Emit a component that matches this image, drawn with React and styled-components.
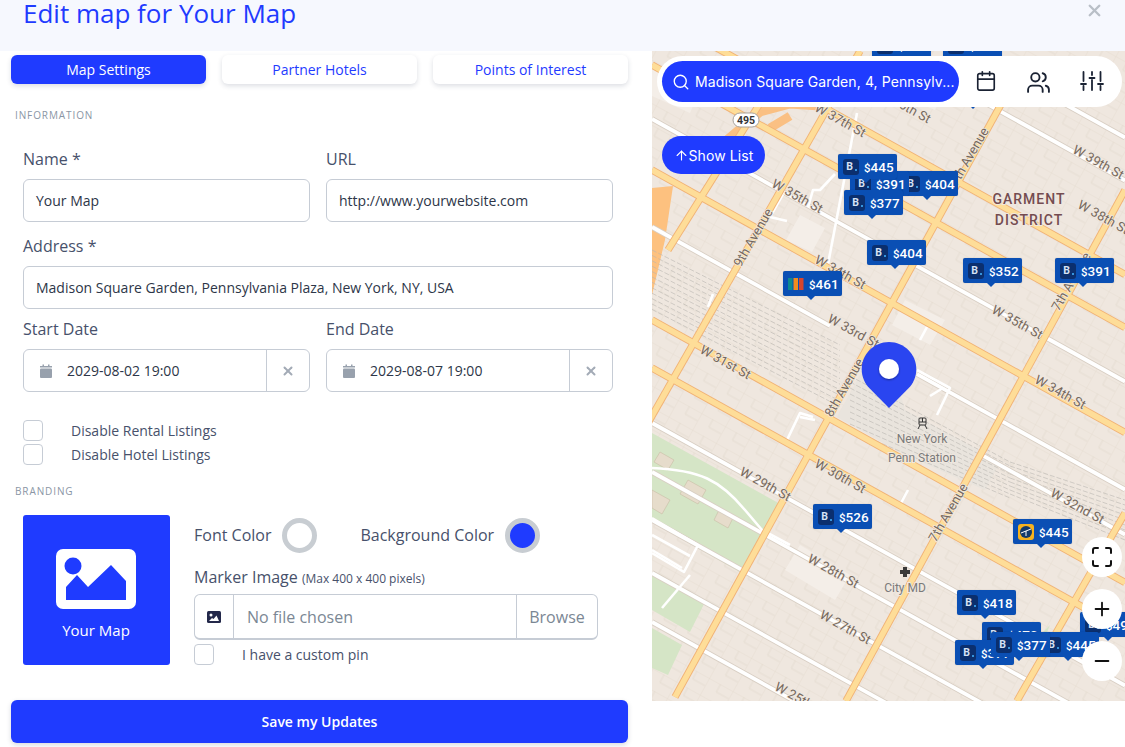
import React from "react";
import styled, { createGlobalStyle } from "styled-components";
import { Search, Calendar, Users, ArrowUp, X, Plus, Minus } from "lucide-react";

const BLUE = "#1f3bff";

const Global = createGlobalStyle`
  *, *::before, *::after { box-sizing: border-box; }
  html, body { margin: 0; padding: 0; background: #fff; overflow: hidden; }
  body { font-family: "Open Sans", "Liberation Sans", sans-serif; }
`;

const Page = styled.div`width: 1125px; height: 747px; overflow: hidden; display: flex; flex-direction: column;`;
const Header = styled.header`height: 51px; flex: none; background: #f6f8fe; display: flex; justify-content: space-between; align-items: flex-start; padding: 0 23px;`;
const Title = styled.h1`margin: 0; font-size: 26px; line-height: 26px; font-weight: 400; color: ${BLUE};`;
const Close = styled.div`color: #b9bfc7; display: flex; margin-top: 1px; margin-right: -2px;`;
const Body = styled.div`flex: 1; display: flex; min-height: 0;`;
const Left = styled.section`width: 652px; flex: none; padding: 4px 24px 0 11px; display: flex; flex-direction: column;`;
const Tabs = styled.nav`display: grid; grid-template-columns: repeat(3, 195px); gap: 16px; height: 29px;`;
const Tab = styled.button`
  border: 0; border-radius: 6px; font: 400 14px "Open Sans", sans-serif; padding: 0;
  background: ${p => (p.$active ? BLUE : "#fff")}; color: ${p => (p.$active ? "#fff" : BLUE)};
  box-shadow: 0 2px 5px rgba(40, 50, 80, .16);
`;
const Section = styled.div`
  font-size: 10px; line-height: 14px; letter-spacing: .9px; color: #8a96a5; margin: ${p => p.$m}; padding-left: 4px;
`;
const Fields = styled.div`padding-left: 12px; display: grid; grid-template-columns: 287px 287px; column-gap: 16px;`;
const Field = styled.div`grid-column: ${p => (p.$wide ? "1 / -1" : "auto")}; display: flex; flex-direction: column; margin-bottom: ${p => p.$mb || 0}px;`;
const Label = styled.label`font-size: 16px; line-height: 22px; color: #47516b; margin-bottom: 9px;`;
const Input = styled.div`
  height: 43px; border: 1px solid #c6ccd5; border-radius: 6px; display: flex; align-items: center;
  padding-left: 12px; font-size: 14px; color: #2d3648; background: #fff;
`;
const DateText = styled.span`flex: 1; margin-left: 15px;`;
const ClearCell = styled.div`width: 43px; height: 100%; border-left: 1px solid #c6ccd5; color: #a3abb6; display: flex; align-items: center; justify-content: center;`;
const CheckRow = styled.div`display: flex; align-items: center; height: 21px; margin-top: ${p => p.$mt || 0}px; color: #47516b; font-size: 14px; margin-left: ${p => p.$ml || 0}px;`;
const Box = styled.span`width: 20px; height: 21px; border: 1px solid #c6ccd5; border-radius: 4px; flex: none; margin-right: 28px; background: #fff;`;
const Branding = styled.div`display: flex; padding-left: 12px; margin-top: 17px;`;
const Logo = styled.div`
  width: 147px; height: 150px; background: ${BLUE}; border-radius: 3px; color: #fff; flex: none;
  display: flex; flex-direction: column; align-items: center; padding: 34px 1px 0 0; font-size: 15px;
`;
const LogoName = styled.div`margin-top: 10px; line-height: 22px;`;
const BrandCol = styled.div`margin-left: 24px; flex: 1; display: flex; flex-direction: column;`;
const ColorRow = styled.div`display: flex; align-items: center; height: 36px; margin-top: 2px; font-size: 16px; color: #47516b;`;
const Swatch = styled.span`width: 35px; height: 35px; border-radius: 50%; border: 5px solid #c8cdd2; background: ${p => p.$c}; margin: 0 ${p => p.$after || 0}px 0 11px; flex: none;`;
const MarkerLabel = styled.div`font-size: 16px; line-height: 22px; color: #47516b; margin-top: 13px;`;
const Small = styled.span`font-size: 12px;`;
const FileBox = styled.div`
  width: 404px; height: 46px; margin-top: 4px; border: 1px solid #c6ccd5; border-bottom-width: 2px; border-radius: 6px;
  display: flex; align-items: stretch; font-size: 16px; color: #7b8794;
`;
const FileIcon = styled.div`width: 39px; border-right: 1px solid #c6ccd5; display: flex; align-items: center; justify-content: center;`;
const FileName = styled.div`flex: 1; display: flex; align-items: center; padding-left: 13px;`;
const Browse = styled.div`width: 81px; border-left: 1px solid #c6ccd5; display: flex; align-items: center; justify-content: center;`;
const Save = styled.button`
  width: 617px; height: 43px; margin-top: 35px; border: 0; border-radius: 6px; background: ${BLUE}; color: #fff;
  font: 600 14px "Open Sans", sans-serif; box-shadow: 0 2px 5px rgba(40, 50, 80, .18); flex: none;
`;

const MapWrap = styled.div`position: relative; width: 473px; height: 650px; overflow: hidden; background: #efe7df; font-family: Inter, sans-serif;`;
const MapSvg = styled.svg`display: block; width: 473px; height: 650px;`;
const SearchBar = styled.div`
  position: absolute; left: 5px; top: 5px; width: 465px; height: 51px; border-radius: 26px; background: #fff;
  display: flex; align-items: center; padding-left: 5px; color: #1a2233;
`;
const SearchPill = styled.div`
  width: 297px; height: 41px; border-radius: 21px; background: ${BLUE}; color: #fff; display: flex; align-items: center;
  padding-left: 10px; font-size: 14px; letter-spacing: .1px; flex: none; white-space: nowrap;
`;
const SearchText = styled.span`margin-left: 5px;`;
const BarIcon = styled.div`position: absolute; top: ${p => p.$y || 14}px; left: ${p => p.$x}px; display: flex;`;
const ShowList = styled.div`
  position: absolute; left: 10px; top: 85px; width: 103px; height: 38px; border-radius: 19px; background: ${BLUE}; color: #fff;
  display: flex; align-items: center; justify-content: center; font-size: 14px; letter-spacing: .1px;
`;
const RoundBtn = styled.div`
  position: absolute; left: 430px; top: ${p => p.$y}px; width: 40px; height: 40px; border-radius: 50%; background: #fff; color: #111;
  display: flex; align-items: center; justify-content: center;
`;
const MarkerBox = styled.div`
  position: absolute; left: ${p => p.$x - 652}px; top: ${p => p.$y - 51}px; width: 59px; height: 25px; background: #0a4fb4; border-radius: 2px;
  box-shadow: 0 0 1px rgba(0,0,0,.3); color: #fff; display: flex; align-items: center; padding-left: 5px; font-family: Roboto, sans-serif;
  font-size: 13.5px; font-weight: 500;
  &::after {
    content: ""; position: absolute; left: 24px; top: 25px; border: 4px solid transparent; border-top-color: #0a4fb4; border-bottom: 0;
  }
`;
const Price = styled.span`margin-left: 5px; white-space: nowrap;`;
const Dollar = styled.span`font-size: 11.5px;`;
const BIcon = styled.span`
  width: 16px; height: 16px; border-radius: 3px; background: #0b2f6e; flex: none; display: flex; align-items: center;
  justify-content: center; font: 700 10.5px Roboto, sans-serif; color: #d6e2f5; position: relative; padding: 0 3px 1px 0;
  &::after { content: ""; position: absolute; right: 2.5px; bottom: 4px; width: 1.6px; height: 1.6px; border-radius: 50%; background: #3fa9f5; }
`;
const Pin = styled.svg`position: absolute; left: 209px; top: 290px;`;

const streets = [
  [-125, "w", 980, 1125], [-82, "w", 790, 1125], [12, "o", 652, 1125], [65, "o", 652, 1125],
  [119, "w", 652, 1125], [170, "o", 652, 1125], [227, "w", 652, 830], [227, "w", 917, 1125],
  [272, "w", 983, 1125], [320, "o", 652, 1125], [368, "o", 652, 1125], [423, "w", 652, 1125],
  [472, "w", 652, 1125], [520, "w", 652, 1125], [573, "w", 652, 1125], [622, "w", 652, 1125],
];
const aves = [
  [1017, 701, 1125, 513], [846, 701, 1125, 190], [675, 697, 1010, 88], [640, 437, 860, 51], [668, 250, 762, 100],
];
const labels = [
  ["W 37th St", 840, 121, 29], ["W 35th St", 797, 197, 29], ["W 34th St", 840, 273, 29], ["9th Avenue", 754, 238, -60],
  ["8th Avenue", 845, 388, -60], ["W 33rd St", 853, 332, 29], ["W 31st St", 725, 363, 29], ["W 30th St", 840, 477, 29],
  ["W 29th St", 765, 485, 29], ["W 34th St", 1060, 393, 29], ["W 35th St", 1017, 323, 29], ["7th Avenue", 1072, 282, -60],
  ["7th Avenue", 949, 513, -60], ["W 32nd St", 1077, 507, 29], ["W 28th St", 833, 572, 29], ["W 27th St", 845, 628, 29],
  ["W 25th St", 800, 700, 29], ["W 39th St", 1098, 163, 29], ["W 38th St", 1103, 218, 29], ["7th Avenue", 970, 157, -60],
  ["W 36th St", 905, 107, 29],
];
const service = [
  "M783 194 L770 217 L787 221", "M835 174 L820 190 L813 190 L808 207", "M857 113 L828 264",
  "M793 278 L788 291", "M713 294 L708 307", "M927 327 L920 340", "M917 370 L950 388 L937 415", "M930 396 L943 388",
  "M813 417 L800 413 L787 440 M800 417 L815 420", "M908 490 L900 505", "M652 468 C700 470 720 480 745 510 L762 530 L790 545",
  "M652 518 L698 545 L684 572 L652 553", "M652 535 L690 556", "M690 575 L662 608", "M652 550 L682 568",
];
const rails = [];
for (let i = 0; i < 12; i++) rails.push([652, 250 + i * 5.4, 840, 345 + i * 5.6]);
for (let i = 0; i < 10; i++) rails.push([850, 376 + i * 6, 1010, 462 + i * 4]);
for (let i = 0; i < 9; i++) rails.push([1010, 462 + i * 4, 1125, 500 + i * 5]);

const line = (y0, x) => y0 + 0.555 * (x - 652);

function MapDrawing() {
  const orange = streets.filter(s => s[1] === "o").map(([y, , a, b]) => `M${a} ${line(y, a)} L${b} ${line(y, b)}`)
    .concat(aves.map(([a, b, c, d]) => `M${a} ${b} L${c} ${d}`));
  return (
    <MapSvg viewBox="652 51 473 650" xmlns="http://www.w3.org/2000/svg">
      <defs>
        <pattern id="blocks" width="27" height="19" patternUnits="userSpaceOnUse" patternTransform="rotate(29) translate(4 2)">
          <path d="M0 0H27M0 0V19M13 9H27M13 0V9" fill="none" stroke="#dfd6ca" strokeWidth=".6" />
        </pattern>
      </defs>
      <rect x="652" y="51" width="473" height="650" fill="#efe7df" />
      <rect x="652" y="51" width="473" height="650" fill="url(#blocks)" />
      <path d="M652 433 L782 505 L745 575 L652 522Z M652 575 L704 604 L690 632 L652 610Z M652 628 L682 645 L668 675 L652 668Z M1035 640 L1050 625 L1040 650Z" fill="#d5e5c6" />
      <path d="M660 452 l14 8 -6 10 -14 -8z M688 480 l18 10 -8 14 -18 -10z M720 508 l14 8 -6 12 -14 -8z M652 490 l18 10 -8 14 -10 -6z" fill="#e6dccb" stroke="#c5b79e" strokeWidth=".5" />
      <path d="M837 417 L860 375 L900 392 L905 410 L1000 462 L985 490 L905 455 Z" fill="#e9e4dd" />
      <path d="M652 67 L700 90 L690 113 L652 96Z M800 215 L825 228 L812 252 L786 240Z M910 75 L945 90 L935 110 L900 95Z M905 300 L945 320 L930 345 L892 325Z M800 545 L850 575 L835 600 L785 570Z" fill="#f4eee8" />
      <path d="M652 188 L673 186 L665 240 L652 295Z" fill="#fdc17f" />
      <path d="M715 150 L760 112 L790 104 L820 106 M770 128 L790 116" fill="none" stroke="#fac083" strokeWidth="9" />
      {rails.map(([a, b, c, d], i) => (
        <path key={i} d={`M${a} ${b} L${c} ${d}`} stroke="#b9b5b0" strokeWidth=".6" strokeDasharray="5 2" fill="none" />
      ))}
      {streets.filter(s => s[1] === "w").map(([y, , a, b], i) => (
        <g key={i}>
          <path d={`M${a} ${line(y, a)} L${b} ${line(y, b)}`} stroke="#d8cec3" strokeWidth="5.5" />
          <path d={`M${a} ${line(y, a)} L${b} ${line(y, b)}`} stroke="#fff" strokeWidth="3.8" />
        </g>
      ))}
      {service.map((d, i) => (
        <path key={i} d={d} fill="none" stroke="#fff" strokeWidth="2.6" strokeLinejoin="round" />
      ))}
      {orange.map((d, i) => <path key={i} d={d} stroke="#f1b275" strokeWidth="7.4" />)}
      {orange.map((d, i) => <path key={`i${i}`} d={d} stroke="#fedd98" strokeWidth="5.6" />)}
      {labels.map(([t, x, y, r], i) => (
        <text key={i} transform={`translate(${x} ${y}) rotate(${r})`} textAnchor="middle" dominantBaseline="middle"
          fontFamily="Roboto, sans-serif" fontSize="13" fill="#75675c" stroke="#efe7df" strokeWidth="1.6" paintOrder="stroke">{t}</text>
      ))}
      <rect x="733" y="113" width="26" height="14" rx="7" fill="#fff" stroke="#a9a39c" />
      <text x="746" y="124" textAnchor="middle" fontFamily="Roboto, sans-serif" fontSize="10.5" fontWeight="700" fill="#333">495</text>
      <text x="1029" y="204" textAnchor="middle" fontFamily="Roboto, sans-serif" fontSize="14" fontWeight="500" letterSpacing="1" fill="#744c50" stroke="#efe7df" strokeWidth="2" paintOrder="stroke">GARMENT</text>
      <text x="1029" y="225" textAnchor="middle" fontFamily="Roboto, sans-serif" fontSize="14" fontWeight="500" letterSpacing="1" fill="#744c50" stroke="#efe7df" strokeWidth="2" paintOrder="stroke">DISTRICT</text>
      <g fill="none" stroke="#333" strokeWidth="1">
        <rect x="919" y="418" width="7" height="7" rx="1" />
        <path d="M919 422H926M922.5 418V422M920 425L918 429M925 425L927 429" />
      </g>
      <g fontFamily="Roboto, sans-serif" fontSize="12" fill="#7a7a7a" textAnchor="middle" stroke="#efe7df" strokeWidth="2" paintOrder="stroke">
        <text x="922" y="443">New York</text>
        <text x="922" y="462">Penn Station</text>
        <text x="905" y="592">City MD</text>
      </g>
      <path d="M903 567h4v3h3v4h-3v3h-4v-3h-3v-4h3z" fill="#3a3a3a" />
    </MapSvg>
  );
}

const markers = [
  [872, 33, "$345"], [943, 33, "$391"], [945, 80, "$404"],
  [899, 171, "$404"], [850, 171, "$391"], [838, 154, "$445"], [844, 190, "$377"],
  [867, 240, "$404"], [963, 258, "$352"], [1055, 258, "$391"], [783, 271, "$461", "vr"],
  [813, 504, "$526"], [1013, 519, "$445", "ex"], [957, 590, "$418"],
  [982, 622, "$470"], [955, 640, "$377"], [1080, 612, "$495"], [1040, 632, "$445"], [991, 632, "$377"],
];

function MarkerIcon({ kind }) {
  if (kind === "vr")
    return (
      <svg width="16" height="16" viewBox="0 0 16 16">
        <rect x="0" y="2" width="4.5" height="12" fill="#0e8a8f" />
        <rect x="5.5" y="2" width="4.5" height="12" fill="#f28c1e" />
        <rect x="11" y="2" width="4.5" height="12" fill="#d8452e" />
      </svg>
    );
  if (kind === "ex")
    return (
      <svg width="16" height="16" viewBox="0 0 16 16">
        <rect width="16" height="16" rx="3" fill="#f5b21f" />
        <circle cx="8" cy="8" r="6" fill="#123a6b" />
        <path d="M3 9L13 5M8 7V12" stroke="#fff" strokeWidth="1" />
      </svg>
    );
  return <BIcon>B</BIcon>;
}

function Marker({ x, y, price, kind }) {
  return (
    <MarkerBox $x={x} $y={y}>
      <MarkerIcon kind={kind} />
      <Price><Dollar>$</Dollar>{price.slice(1)}</Price>
    </MarkerBox>
  );
}

function DateInput({ value }) {
  return (
    <Input>
      <svg width="12" height="14" viewBox="0 0 12 14" fill="#98a1ad" style={{ marginLeft: 4 }}>
        <rect x="0" y="4.5" width="12" height="9.5" rx="1" />
        <rect x="0" y="2" width="12" height="1.5" />
        <rect x="2.5" y="0.5" width="1.5" height="2" />
        <rect x="8" y="0.5" width="1.5" height="2" />
      </svg>
      <DateText>{value}</DateText>
      <ClearCell><X size={14} strokeWidth={3.4} /></ClearCell>
    </Input>
  );
}

export default function App() {
  return (
    <Page>
      <Global />
      <Header>
        <Title>Edit map for Your Map</Title>
        <Close><X size={19} strokeWidth={3} /></Close>
      </Header>
      <Body>
        <Left>
          <Tabs>
            <Tab $active>Map Settings</Tab>
            <Tab>Partner Hotels</Tab>
            <Tab>Points of Interest</Tab>
          </Tabs>
          <Section $m="24px 0 26px">INFORMATION</Section>
          <Fields>
            <Field $mb={13}><Label>Name *</Label><Input>Your Map</Input></Field>
            <Field $mb={13}><Label>URL</Label><Input>http://www.yourwebsite.com</Input></Field>
            <Field $wide $mb={9}><Label>Address *</Label><Input>Madison Square Garden, Pennsylvania Plaza, New York, NY, USA</Input></Field>
            <Field><Label>Start Date</Label><DateInput value="2029-08-02 19:00" /></Field>
            <Field><Label>End Date</Label><DateInput value="2029-08-07 19:00" /></Field>
          </Fields>
          <CheckRow $mt={28} $ml={12}><Box />Disable Rental Listings</CheckRow>
          <CheckRow $mt={3} $ml={12}><Box />Disable Hotel Listings</CheckRow>
          <Section $m="19px 0 0">BRANDING</Section>
          <Branding>
            <Logo>
              <svg width="80" height="60" viewBox="0 0 80 60">
                <rect width="80" height="60" rx="7" fill="#fff" />
                <circle cx="17" cy="17" r="8.5" fill={BLUE} />
                <path d="M10 51V38L21 26L32 38L55 16L70 32V51Z" fill={BLUE} />
              </svg>
              <LogoName>Your Map</LogoName>
            </Logo>
            <BrandCol>
              <ColorRow>Font Color<Swatch $c="#fff" $after={43} />Background Color<Swatch $c={BLUE} /></ColorRow>
              <MarkerLabel>Marker Image <Small>(Max 400 x 400 pixels)</Small></MarkerLabel>
              <FileBox>
                <FileIcon>
                  <svg width="14" height="12" viewBox="0 0 14 12">
                    <rect width="14" height="12" rx="1.5" fill="#23284a" />
                    <circle cx="4" cy="4" r="1.5" fill="#fff" />
                    <path d="M2 10L5 7L6.5 8L9.5 4.5L12 10Z" fill="#fff" />
                  </svg>
                </FileIcon>
                <FileName>No file chosen</FileName>
                <Browse>Browse</Browse>
              </FileBox>
              <CheckRow $mt={4}><Box />I have a custom pin</CheckRow>
            </BrandCol>
          </Branding>
          <Save>Save my Updates</Save>
        </Left>
        <MapWrap>
          <MapDrawing />
          {markers.map(([x, y, p, k], i) => <Marker key={i} x={x} y={y} price={p} kind={k} />)}
          <Pin width="56" height="68" viewBox="0 0 56 68">
            <defs>
              <filter id="pinshadow" x="-50%" y="-50%" width="200%" height="200%">
                <feDropShadow dx="0" dy="1" stdDeviation="1" floodColor="#000" floodOpacity=".4" />
              </filter>
            </defs>
            <path d="M28 1C12.8 1 .7 13.2.7 28.2C.7 35.7 3.8 42.5 8.5 47.3L28 67L47.5 47.3C52.2 42.5 55.3 35.7 55.3 28.2C55.3 13.2 43.2 1 28 1Z" fill="#2a45f0" />
            <circle cx="28" cy="28" r="10" fill="#fff" filter="url(#pinshadow)" />
          </Pin>
          <SearchBar>
            <SearchPill>
              <Search size={18} strokeWidth={1.8} />
              <SearchText>Madison Square Garden, 4, Pennsylv...</SearchText>
            </SearchPill>
            <BarIcon $x={318}><Calendar size={22} strokeWidth={1.8} /></BarIcon>
            <BarIcon $x={369}><Users size={25} strokeWidth={1.8} /></BarIcon>
            <BarIcon $x={423} $y={15}>
              <svg width="24" height="20" viewBox="0 0 24 20" fill="none" stroke="currentColor" strokeWidth="1.8" strokeLinecap="round">
                <path d="M3.5 1V10M3.5 15V19M12 1V4M12 9V19M20.5 1V10M20.5 15V19" />
                <path d="M1 13H6M9.5 7H14.5M18 13H23" />
              </svg>
            </BarIcon>
          </SearchBar>
          <ShowList><ArrowUp size={15} strokeWidth={1.8} />Show List</ShowList>
          <RoundBtn $y={486}>
            <svg width="22" height="22" viewBox="0 0 22 22" fill="none" stroke="#111" strokeWidth="2" strokeLinecap="round">
              <path d="M2 7V4a2 2 0 0 1 2-2h3M15 2h3a2 2 0 0 1 2 2v3M20 15v3a2 2 0 0 1-2 2h-3M7 20H4a2 2 0 0 1-2-2v-3" />
            </svg>
          </RoundBtn>
          <RoundBtn $y={538}><Plus size={22} strokeWidth={2} /></RoundBtn>
          <RoundBtn $y={590}><Minus size={22} strokeWidth={2} /></RoundBtn>
        </MapWrap>
      </Body>
    </Page>
  );
}
